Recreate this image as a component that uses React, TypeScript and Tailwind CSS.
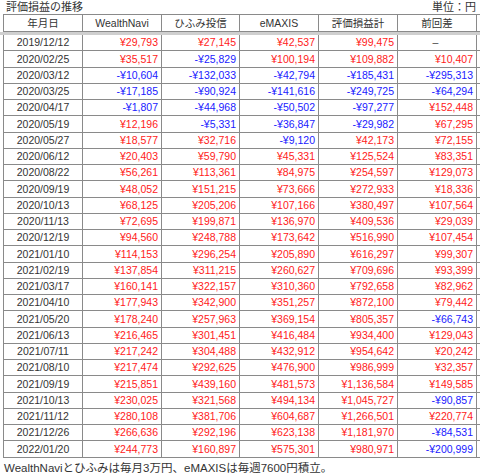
import React from "react";

type Row = [string, string, string, string, string, string | null];

const rows: Row[] = [
  ["2019/12/12", "29,793", "27,145", "42,537", "99,475", null],
  ["2020/02/25", "35,517", "-25,829", "100,194", "109,882", "10,407"],
  ["2020/03/12", "-10,604", "-132,033", "-42,794", "-185,431", "-295,313"],
  ["2020/03/25", "-17,185", "-90,924", "-141,616", "-249,725", "-64,294"],
  ["2020/04/17", "-1,807", "-44,968", "-50,502", "-97,277", "152,448"],
  ["2020/05/19", "12,196", "-5,331", "-36,847", "-29,982", "67,295"],
  ["2020/05/27", "18,577", "32,716", "-9,120", "42,173", "72,155"],
  ["2020/06/12", "20,403", "59,790", "45,331", "125,524", "83,351"],
  ["2020/08/22", "56,261", "113,361", "84,975", "254,597", "129,073"],
  ["2020/09/19", "48,052", "151,215", "73,666", "272,933", "18,336"],
  ["2020/10/13", "68,125", "205,206", "107,166", "380,497", "107,564"],
  ["2020/11/13", "72,695", "199,871", "136,970", "409,536", "29,039"],
  ["2020/12/19", "94,560", "248,788", "173,642", "516,990", "107,454"],
  ["2021/01/10", "114,153", "296,254", "205,890", "616,297", "99,307"],
  ["2021/02/19", "137,854", "311,215", "260,627", "709,696", "93,399"],
  ["2021/03/17", "160,141", "322,157", "310,360", "792,658", "82,962"],
  ["2021/04/10", "177,943", "342,900", "351,257", "872,100", "79,442"],
  ["2021/05/20", "178,240", "257,963", "369,154", "805,357", "-66,743"],
  ["2021/06/13", "216,465", "301,451", "416,484", "934,400", "129,043"],
  ["2021/07/11", "217,242", "304,488", "432,912", "954,642", "20,242"],
  ["2021/08/10", "217,474", "292,625", "476,900", "986,999", "32,357"],
  ["2021/09/19", "215,851", "439,160", "481,573", "1,136,584", "149,585"],
  ["2021/10/13", "230,025", "321,568", "494,134", "1,045,727", "-90,857"],
  ["2021/11/12", "280,108", "381,706", "604,687", "1,266,501", "220,774"],
  ["2021/12/26", "266,636", "292,196", "623,138", "1,181,970", "-84,531"],
  ["2022/01/20", "244,773", "160,897", "575,301", "980,971", "-200,999"],
];

const headers = ["年月日", "WealthNavi", "ひふみ投信", "eMAXIS", "評価損益計", "前回差"];
const widths = ["w-[79px]", "w-[79px]", "w-[78px]", "w-[79px]", "w-[79px]", "w-[79px]"];

const Yen = ({ v }: { v: string | null }) => {
  if (v === null) return <span className="text-[#444]">–</span>;
  const neg = v.startsWith("-");
  return (
    <span className={neg ? "text-[#1a1aff]" : "text-[#ff1a1a]"}>
      {neg ? "-¥" + v.slice(1) : "¥" + v}
    </span>
  );
};

export default function App() {
  return (
    <div className="w-[480px] h-[475px] bg-white text-[#333] font-['Liberation_Sans','Noto_Sans_CJK_JP',sans-serif] text-[10.5px] leading-none overflow-hidden">
      {/* Title */}
      <div className="h-[14px] flex items-center justify-between pl-[6px] pr-[4px]">
        <span className="text-[11px]">評価損益の推移</span>
        <span className="text-[11px]">単位：円</span>
      </div>

      {/* Header */}
      <div className="ml-[3px] flex border-t border-l border-b border-[#8a8a8a]">
        {headers.map((h, i) => (
          <div
            key={h}
            className={`${widths[i]} h-[16px] flex items-center justify-center border-r border-[#8a8a8a]`}
          >
            {h}
          </div>
        ))}
      </div>

      {/* Frozen pane line */}
      <div className="h-[3px] bg-[#cfcfcf]" />

      {/* Body */}
      <div className="ml-[3px] border-l border-[#8a8a8a]">
        {rows.map((r) => (
          <div key={r[0]} className="flex h-[16.25px] border-b border-[#8a8a8a]">
            <div className={`${widths[0]} flex items-center justify-center border-r border-[#8a8a8a]`}>
              {r[0]}
            </div>
            {r.slice(1).map((v, i) => (
              <div
                key={i}
                className={`${widths[i + 1]} flex items-center border-r border-[#8a8a8a] pr-[3px] ${
                  v === null ? "justify-center" : "justify-end"
                }`}
              >
                <Yen v={v} />
              </div>
            ))}
          </div>
        ))}
      </div>

      {/* Footer */}
      <div className="pl-[4px] pt-[5px] text-[11.5px]">
        WealthNaviとひふみは毎月3万円、eMAXISは毎週7600円積立。
      </div>
    </div>
  );
}
